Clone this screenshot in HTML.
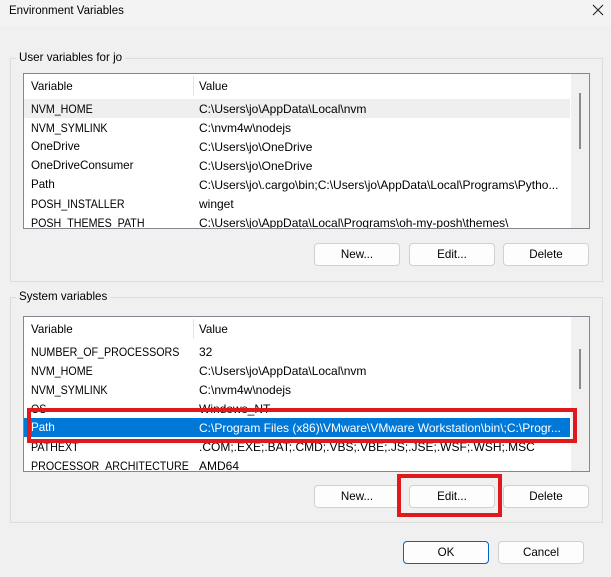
<!DOCTYPE html>
<html><head><style>
*{box-sizing:border-box;margin:0;padding:0}
body{width:611px;height:577px;background:#f0f0f0;font-family:"Liberation Sans",sans-serif;font-size:11.6px;color:#000;position:relative;overflow:hidden}
.a{position:absolute}
.title{left:0;top:0;width:611px;height:26px;background:#f3f3f3}
.grp{border:1px solid #dcdcdc;}
.lbl{background:#f0f0f0;padding:0 3px;line-height:14px}
.list{background:#fff;border:1px solid #828790;overflow:hidden}
.row{position:absolute;left:0;height:19px;line-height:20px;width:546px;white-space:nowrap;font-size:12px}
.row span{position:absolute}
.c1{left:7px;transform:scaleX(0.89);transform-origin:0 0}.c2{left:175px}
.sb{position:absolute;right:0;top:0;width:18px;height:100%;background:#f0f0f0}
.btn{position:absolute;height:23px;background:#fdfdfd;border:1px solid #d0d0d0;border-radius:4px;text-align:center;line-height:21px}
.red{position:absolute;border:4px solid #e0191d}
</style></head><body>
<div class="a title"></div>
<div class="a" style="left:9px;top:5px;font-size:11.5px">Environment Variables</div>
<svg class="a" style="left:592px;top:4px" width="12" height="12"><path d="M1 1L11 11M11 1L1 11" stroke="#222" stroke-width="1.1"/></svg>

<div class="a grp" style="left:10px;top:58px;width:593px;height:224px"></div>
<div class="a lbl" style="left:16px;top:51px">User variables for jo</div>
<div class="a list" style="left:23px;top:73px;width:567px;height:156px">
 <div class="row" style="top:0;height:24px;line-height:26px;font-size:11.6px"><span class="c1" style="transform:none">Variable</span><span class="c2">Value</span></div>
 <div class="a" style="left:169px;top:2px;width:1px;height:20px;background:#e5e5e5"></div>
 <div class="row" style="top:25px;background:#efefef"><span class="c1">NVM_HOME</span><span class="c2">C:\Users\jo\AppData\Local\nvm</span></div>
 <div class="row" style="top:44px"><span class="c1">NVM_SYMLINK</span><span class="c2">C:\nvm4w\nodejs</span></div>
 <div class="row" style="top:63px"><span class="c1" style="transform:none;font-size:11.6px">OneDrive</span><span class="c2">C:\Users\jo\OneDrive</span></div>
 <div class="row" style="top:82px"><span class="c1" style="transform:none;font-size:11.6px">OneDriveConsumer</span><span class="c2">C:\Users\jo\OneDrive</span></div>
 <div class="row" style="top:101px"><span class="c1" style="transform:none;font-size:11.6px">Path</span><span class="c2">C:\Users\jo\.cargo\bin;C:\Users\jo\AppData\Local\Programs\Pytho...</span></div>
 <div class="row" style="top:120px"><span class="c1">POSH_INSTALLER</span><span class="c2">winget</span></div>
 <div class="row" style="top:139px"><span class="c1">POSH_THEMES_PATH</span><span class="c2">C:\Users\jo\AppData\Local\Programs\oh-my-posh\themes\</span></div>
 <div class="sb"><div class="a" style="left:8px;top:19px;width:2px;height:56px;background:#8a8a8a"></div></div>
</div>
<div class="btn" style="left:314px;top:243px;width:86px">New...</div>
<div class="btn" style="left:409px;top:243px;width:86px">Edit...</div>
<div class="btn" style="left:503px;top:243px;width:86px">Delete</div>

<div class="a grp" style="left:10px;top:297px;width:593px;height:226px"></div>
<div class="a lbl" style="left:16px;top:290px">System variables</div>
<div class="a list" style="left:23px;top:316px;width:567px;height:156px">
 <div class="row" style="top:0;height:24px;line-height:26px;font-size:11.6px"><span class="c1" style="transform:none">Variable</span><span class="c2">Value</span></div>
 <div class="a" style="left:169px;top:2px;width:1px;height:20px;background:#e5e5e5"></div>
 <div class="row" style="top:25px"><span class="c1">NUMBER_OF_PROCESSORS</span><span class="c2">32</span></div>
 <div class="row" style="top:44px"><span class="c1">NVM_HOME</span><span class="c2">C:\Users\jo\AppData\Local\nvm</span></div>
 <div class="row" style="top:63px"><span class="c1">NVM_SYMLINK</span><span class="c2">C:\nvm4w\nodejs</span></div>
 <div class="row" style="top:82px"><span class="c1">OS</span><span class="c2">Windows_NT</span></div>
 <div class="row" style="top:101px;background:#0078d7;color:#fff"><span class="c1" style="transform:none;font-size:11.6px">Path</span><span class="c2">C:\Program Files (x86)\VMware\VMware Workstation\bin\;C:\Progr...</span></div>
 <div class="row" style="top:120px"><span class="c1">PATHEXT</span><span class="c2">.COM;.EXE;.BAT;.CMD;.VBS;.VBE;.JS;.JSE;.WSF;.WSH;.MSC</span></div>
 <div class="row" style="top:139px"><span class="c1">PROCESSOR_ARCHITECTURE</span><span class="c2">AMD64</span></div>
 <div class="sb"><div class="a" style="left:8px;top:32px;width:2px;height:40px;background:#8a8a8a"></div></div>
</div>
<div class="red" style="left:27px;top:408px;width:550px;height:35px"></div>
<div class="btn" style="left:314px;top:485px;width:86px">New...</div>
<div class="btn" style="left:409px;top:485px;width:86px">Edit...</div>
<div class="btn" style="left:503px;top:485px;width:86px">Delete</div>
<div class="red" style="left:397px;top:474px;width:105px;height:43px"></div>

<div class="btn" style="left:403px;top:541px;width:86px;border-color:#0067c0">OK</div>
<div class="btn" style="left:498px;top:541px;width:86px">Cancel</div>
</body></html>
